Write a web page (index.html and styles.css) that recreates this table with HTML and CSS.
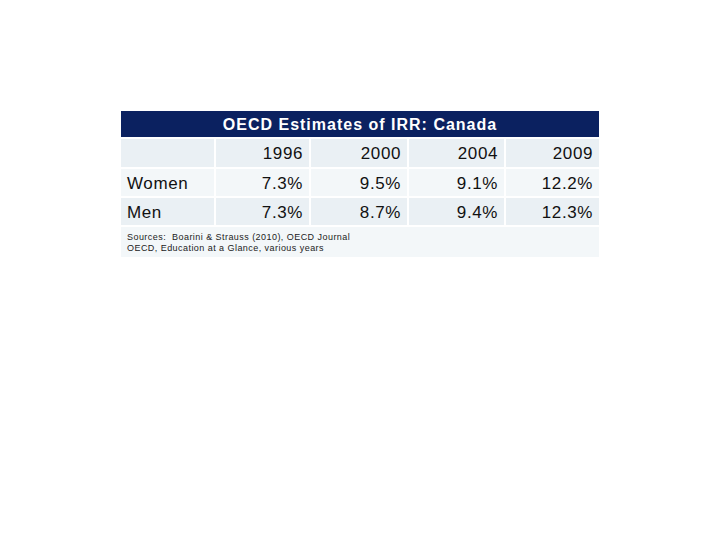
FILE: index.html
```html
<!DOCTYPE html>
<html>
<head>
<meta charset="utf-8">
<link rel="stylesheet" href="styles.css">
</head>
<body>
<div class="page">
  <div class="table">
    <div class="title">OECD Estimates of IRR: Canada</div>
    <div class="grid">
      <div class="cell a"></div>
      <div class="cell a num">1996</div>
      <div class="cell a num">2000</div>
      <div class="cell a num">2004</div>
      <div class="cell a num">2009</div>

      <div class="cell b label">Women</div>
      <div class="cell b num">7.3%</div>
      <div class="cell b num">9.5%</div>
      <div class="cell b num">9.1%</div>
      <div class="cell b num">12.2%</div>

      <div class="cell a label">Men</div>
      <div class="cell a num">7.3%</div>
      <div class="cell a num">8.7%</div>
      <div class="cell a num">9.4%</div>
      <div class="cell a num">12.3%</div>

      <div class="source">Sources:&nbsp; Boarini &amp; Strauss (2010), OECD Journal<br>OECD, Education at a Glance, various years</div>
    </div>
  </div>
</div>
</body>
</html>
```

FILE: styles.css
```css
html, body {
  margin: 0;
  padding: 0;
  background: #ffffff;
}
.page {
  padding: 111px 0 0 121px;
  font-family: "Liberation Sans", Arial, sans-serif;
}
.table {
  width: 478px;
}
.title {
  height: 26px;
  background: #0b2160;
  color: #ffffff;
  font-weight: bold;
  font-size: 16px;
  letter-spacing: 1px;
  line-height: 28px;
  text-align: center;
  margin-bottom: 2px;
}
.grid {
  display: grid;
  grid-template-columns: 93px 93px 96px 95px 93px;
  grid-template-rows: 28px 27px 27px 30px;
  gap: 2px;
}
.cell {
  font-size: 17px;
  letter-spacing: 0.6px;
  color: #111111;
  line-height: 29px;
}
.cell.a {
  background: #eaf0f4;
}
.cell.b {
  background: #f3f7f9;
}
.num {
  text-align: right;
  padding-right: 6px;
}
.label {
  padding-left: 6px;
}
.source {
  grid-column: 1 / -1;
  background: #f3f7f9;
  font-size: 9px;
  line-height: 11px;
  letter-spacing: 0.45px;
  color: #222222;
  padding: 5px 6px 0;
}
```
